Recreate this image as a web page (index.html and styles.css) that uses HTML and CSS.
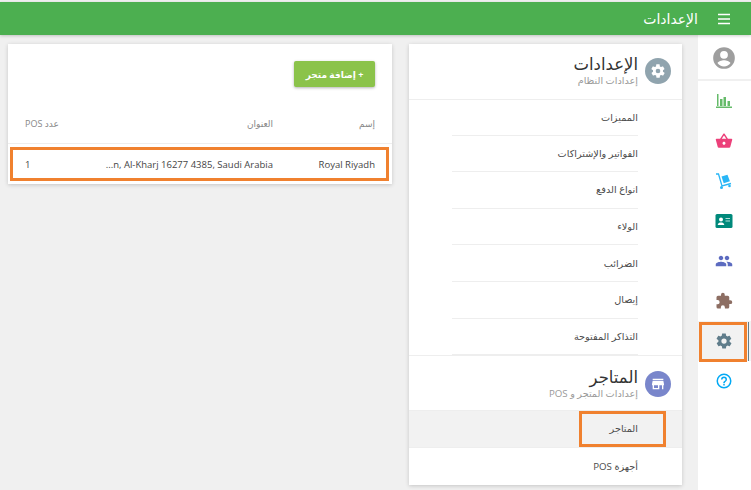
FILE: index.html
```html
<!DOCTYPE html>
<html lang="ar" dir="rtl">
<head>
<meta charset="utf-8">
<title>الإعدادات</title>
<link rel="stylesheet" href="styles.css">
</head>
<body>
<header class="topbar">
  <svg class="menu-icon" viewBox="0 0 14 12"><path d="M1 1.500h12M1 6h12M1 10.500h12" stroke="#fff" stroke-width="1.500" fill="none"/></svg>
  <span class="topbar-title">الإعدادات</span>
</header>
<div class="app">
  <nav class="rail">
    <div class="rail-user">
      <svg class="ic-user" viewBox="0 0 24 24"><path fill="#9e9e9e" d="M12 2a10 10 0 100 20 10 10 0 000-20zm0 3.500a3.600 3.600 0 110 7.200 3.600 3.600 0 010-7.200zm0 14.300a7.500 7.500 0 01-6-3.100c.6-1.800 3.800-2.700 6-2.700s5.400.9 6 2.700a7.500 7.500 0 01-6 3.100z"/></svg>
    </div>
    <ul class="rail-list">
      <li class="rail-item"><svg class="ic" viewBox="0 0 18 18"><path fill="#66bb6a" d="M2 2h1.500v12H2zM5 7h2.500v7H5zM8.500 5H11v9H8.500zM12.500 9H15v5h-2.500zM1 14.500h16V16H1z"/></svg></li>
      <li class="rail-item"><svg class="ic" viewBox="0 0 24 24"><path fill="#ec407a" d="M17.210 9l-4.380-6.560c-.19-.28-.51-.42-.83-.42-.32 0-.64.14-.83.43L6.790 9H2c-.55 0-1 .45-1 1 0 .09.01.18.04.27l2.540 9.270c.23.84 1 1.460 1.920 1.460h13c.92 0 1.690-.62 1.930-1.460l2.540-9.270L23 10c0-.55-.45-1-1-1h-4.790zM9 9l3-4.400L15 9H9zm3 8c-1.100 0-2-.9-2-2s.9-2 2-2 2 .9 2 2-.9 2-2 2z"/></svg></li>
      <li class="rail-item"><svg class="ic" viewBox="0 0 18 18"><path fill="none" stroke="#29b6f6" stroke-width="1.300" d="M1 2h2.500l3.500 12 9-2.500"/><path fill="#29b6f6" d="M6.500 4.500l6-1.800 2.400 6.600-6.200 1.900z"/><circle cx="6.500" cy="15.500" r="1.500" fill="#29b6f6"/><circle cx="14.500" cy="14" r="1.300" fill="#29b6f6"/></svg></li>
      <li class="rail-item"><svg class="ic" viewBox="0 0 18 18"><rect x="0.500" y="2" width="17" height="14" rx="1.500" fill="#00897b"/><circle cx="6" cy="7.500" r="2" fill="#fff"/><path fill="#fff" d="M2.700 13c.3-1.800 1.800-2.400 3.300-2.400s3 .6 3.300 2.400z"/><path fill="#b2dfdb" d="M10.500 6H15v1h-4.500zM10.500 8.500H15v1h-4.500z"/></svg></li>
      <li class="rail-item"><svg class="ic" viewBox="0 0 24 24"><path fill="#5c6bc0" d="M16 11c1.660 0 2.990-1.340 2.990-3S17.660 5 16 5c-1.660 0-3 1.340-3 3s1.340 3 3 3zm-8 0c1.660 0 2.990-1.340 2.990-3S9.660 5 8 5C6.340 5 5 6.340 5 8s1.340 3 3 3zm0 2c-2.330 0-7 1.170-7 3.500V19h14v-2.500c0-2.330-4.670-3.500-7-3.500zm8 0c-.29 0-.62.02-.97.05 1.160.84 1.970 1.970 1.970 3.450V19h6v-2.500c0-2.330-4.670-3.500-7-3.500z"/></svg></li>
      <li class="rail-item"><svg class="ic" viewBox="0 0 24 24"><path fill="#8d6e63" d="M20.500 11H19V7a2 2 0 00-2-2h-4V3.500a2.500 2.500 0 00-5 0V5H4a2 2 0 00-2 2v3.800h1.500a2.700 2.700 0 010 5.400H2V20a2 2 0 002 2h3.800v-1.500a2.700 2.700 0 015.400 0V22H17a2 2 0 002-2v-4h1.500a2.500 2.500 0 000-5z"/></svg></li>
      <li class="rail-item rail-active"><svg class="ic" viewBox="0 0 24 24"><path fill="#607d8b" d="M19.400 13c.1-.3.100-.7.100-1s0-.7-.1-1l2.100-1.600c.2-.1.200-.4.100-.6l-2-3.500c-.1-.2-.4-.3-.6-.2l-2.500 1a7 7 0 00-1.700-1l-.4-2.700c0-.2-.2-.4-.5-.4h-4c-.2 0-.5.200-.5.400l-.4 2.700a7 7 0 00-1.700 1l-2.500-1c-.2-.1-.5 0-.6.200l-2 3.500c-.1.200-.1.500.1.600L4.600 11c-.1.300-.1.700-.1 1s0 .7.100 1l-2.100 1.600c-.2.100-.2.400-.1.600l2 3.500c.1.200.4.300.6.200l2.500-1c.5.400 1.100.7 1.700 1l.4 2.700c0 .2.300.4.500.4h4c.3 0 .5-.2.500-.4l.4-2.700a7 7 0 001.700-1l2.500 1c.2.100.5 0 .6-.2l2-3.500c.1-.2.100-.5-.1-.6zM12 15.500a3.500 3.500 0 110-7 3.500 3.500 0 010 7z"/></svg><span class="mark mark-rail"></span></li>
      <li class="rail-item"><svg class="ic" viewBox="0 0 24 24"><path fill="#03a9f4" d="M12 2a10 10 0 100 20 10 10 0 000-20zm0 18a8 8 0 110-16 8 8 0 010 16zm-1-4h2v2h-2zm1-10a4 4 0 00-4 4h2a2 2 0 114 0c0 2-3 1.750-3 5h2c0-2.250 3-2.500 3-5a4 4 0 00-4-4z"/></svg></li>
    </ul>
  </nav>

  <section class="card settings">
    <div class="group-head">
      <span class="badge badge-gray"><svg viewBox="0 0 24 24"><path fill="#fff" d="M19.400 13c.1-.3.100-.7.100-1s0-.7-.1-1l2.100-1.600c.2-.1.200-.4.100-.6l-2-3.500c-.1-.2-.4-.3-.6-.2l-2.500 1a7 7 0 00-1.700-1l-.4-2.700c0-.2-.2-.4-.5-.4h-4c-.2 0-.5.200-.5.400l-.4 2.700a7 7 0 00-1.700 1l-2.500-1c-.2-.1-.5 0-.6.200l-2 3.500c-.1.200-.1.500.1.600L4.600 11c-.1.300-.1.700-.1 1s0 .7.100 1l-2.100 1.600c-.2.100-.2.400-.1.600l2 3.500c.1.200.4.300.6.200l2.500-1c.5.400 1.100.7 1.700 1l.4 2.700c0 .2.300.4.500.4h4c.3 0 .5-.2.500-.4l.4-2.700a7 7 0 001.700-1l2.500 1c.2.100.5 0 .6-.2l2-3.500c.1-.2.100-.5-.1-.6zM12 15.500a3.500 3.500 0 110-7 3.500 3.500 0 010 7z"/></svg></span>
      <div class="group-text">
        <div class="group-title">الإعدادات</div>
        <div class="group-sub">إعدادات النظام</div>
      </div>
    </div>
    <ul class="links">
      <li class="link">المميزات</li>
      <li class="link">الفواتير والإشتراكات</li>
      <li class="link">انواع الدفع</li>
      <li class="link">الولاء</li>
      <li class="link">الضرائب</li>
      <li class="link">إيصال</li>
      <li class="link">التذاكر المفتوحة</li>
    </ul>
    <div class="group-head group-head-second">
      <span class="badge badge-indigo"><svg viewBox="0 0 24 24"><path fill="#fff" d="M20 4H4v2h16V4zm1 10v-2l-1-5H4l-1 5v2h1v6h10v-6h4v6h2v-6h1zm-9 4H6v-4h6v4z"/></svg></span>
      <div class="group-text">
        <div class="group-title">المتاجر</div>
        <div class="group-sub">إعدادات المتجر و POS</div>
      </div>
    </div>
    <ul class="links links-second">
      <li class="link link-active">المتاجر<span class="mark mark-link"></span></li>
      <li class="link link-plain">أجهزة POS</li>
    </ul>
  </section>

  <section class="card stores">
    <div class="toolbar">
      <button class="add-btn" type="button">+ إضافة متجر</button>
    </div>
    <div class="row row-head">
      <span class="col-name">إسم</span>
      <span class="col-addr">العنوان</span>
      <span class="col-pos">عدد POS</span>
    </div>
    <div class="row row-data">
      <span class="col-name">Royal Riyadh</span>
      <span class="col-addr"><bdi>...n, Al-Kharj 16277 4385, Saudi Arabia</bdi></span>
      <span class="col-pos">1</span>
      <span class="mark mark-row"></span>
    </div>
  </section>
</div>
</body>
</html>
```
FILE: styles.css
```css
* { box-sizing: border-box; }
html, body { height: 100%; }
body {
  margin: 0;
  padding-top: 2px;
  background: #f0f0f0;
  font-family: "Open Sans", "DejaVu Sans", sans-serif;
  color: #444;
  overflow: hidden;
}
ul { list-style: none; margin: 0; padding: 0; }

.topbar {
  height: 33px;
  background: #4caf50;
  color: #fff;
  display: flex;
  align-items: center;
  padding-right: 20px;
  gap: 19px;
  box-shadow: 0 1px 3px rgba(0,0,0,.2);
  position: relative;
}
.menu-icon { width: 14px; height: 12px; }
.topbar-title { font-size: 14px; }

.app {
  display: flex;
  align-items: flex-start;
  height: 455px;
}

.rail {
  width: 53px;
  height: 100%;
  background: #fff;
  flex: none;
}
.rail-user {
  height: 46px;
  padding: 2px 1px 0 0;
  display: flex;
  align-items: center;
  justify-content: center;
  border-bottom: 2px solid #f0f0f0;
}
.ic-user { width: 26px; height: 26px; }
.rail-item {
  height: 40px;
  padding-right: 1px;
  display: flex;
  align-items: center;
  justify-content: center;
  position: relative;
}
.ic { width: 18px; height: 18px; }
.rail-active { background: #f2f2f2; }
.rail-active::after {
  content: "";
  position: absolute;
  top: 1px;
  bottom: 0;
  right: 2px;
  width: 1px;
  background: #607d8b;
}

.card {
  background: #fff;
  box-shadow: 0 1px 4px rgba(0,0,0,.18);
  margin-top: 9px;
}
.settings {
  width: 273px;
  height: 441px;
  margin-right: 16px;
  flex: none;
}
.stores {
  width: 384px;
  margin-right: 17px;
  flex: none;
}

.group-head {
  height: 56px;
  display: flex;
  align-items: center;
  gap: 7px;
  padding: 0 11px 2px 0;
  border-bottom: 1px solid #eee;
}
.group-head-second {
  height: 56px;
  border-top: 1px solid #eee;
  border-bottom: 1px solid #eee;
  padding-top: 2px;
  padding-bottom: 0;
}
.badge {
  width: 26px;
  height: 26px;
  border-radius: 50%;
  display: flex;
  align-items: center;
  justify-content: center;
  flex: none;
}
.badge svg { width: 16px; height: 16px; }
.badge-gray { background: #90a4ae; }
.badge-indigo { background: #7986cb; }
.group-title { font-size: 16.500px; line-height: 17px; color: #333; }
.group-sub { font-size: 9.700px; line-height: 13px; margin-top: 2px; color: #999; }

.links { padding: 0 44px 0 43px; }
.link {
  height: 36.600px;
  display: flex;
  align-items: center;
  font-size: 9.700px;
  color: #4a4a4a;
  border-bottom: 1px solid #eee;
}
.link:first-child { height: 35.600px; }
.links-second { padding: 0; }
.links-second > .link { height: 36.600px; }
.link-active {
  background: #f2f2f2;
  border-bottom: 1px solid #eee;
  padding-right: 44px;
  position: relative;
}
.link-plain { padding-right: 44px; border-bottom: 0; }

.toolbar {
  height: 57px;
  padding: 17px 17px 0 0;
  display: flex;
}
.add-btn {
  width: 81px;
  height: 26px;
  border: 0;
  border-radius: 2px;
  background: #8bc34a;
  color: #fff;
  font: 700 9px "Open Sans", "DejaVu Sans", sans-serif;
  box-shadow: 0 1px 3px rgba(0,0,0,.3);
  padding: 0;
}

.row {
  display: flex;
  align-items: center;
  padding: 0 17px;
  font-size: 9.500px;
  position: relative;
}
.row-head {
  height: 43px;
  padding-top: 2px;
  color: #888;
  border-bottom: 1px solid #eee;
  font-size: 9px;
}
.row-data {
  height: 40px;
  color: #444;
}
.col-name { width: 102px; }
.col-addr { flex: 1; }
.col-pos { width: 60px; text-align: left; direction: rtl; }

.mark {
  position: absolute;
  border: 3px solid #f0812f;
  pointer-events: none;
}
.mark-rail { top: 1px; bottom: -1px; left: 1px; right: 4px; }
.mark-link { top: 0; bottom: 0; right: 16px; width: 87px; }
.mark-row { top: 3px; bottom: 3px; left: 2px; right: 3px; }
```
